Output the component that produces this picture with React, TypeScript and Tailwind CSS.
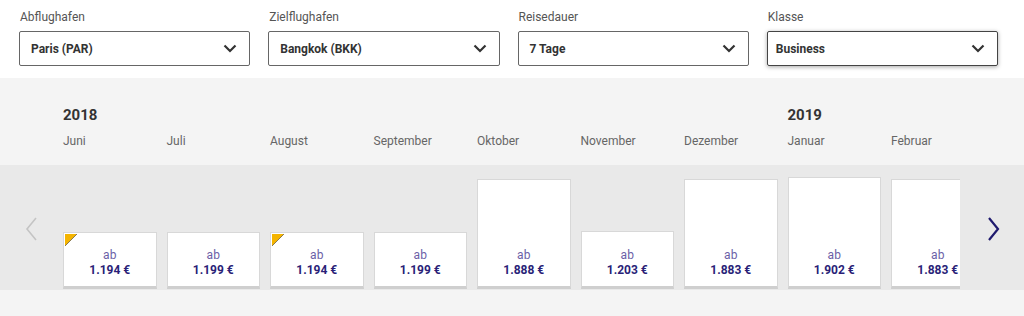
const selects = [
  { label: "Abflughafen", value: "Paris (PAR)" },
  { label: "Zielflughafen", value: "Bangkok (BKK)" },
  { label: "Reisedauer", value: "7 Tage" },
  { label: "Klasse", value: "Business", focused: true },
]

const months = [
  { name: "Juni", year: "2018", price: "1.194 €", h: "h-[57px]", deal: true },
  { name: "Juli", price: "1.199 €", h: "h-[57px]" },
  { name: "August", price: "1.194 €", h: "h-[57px]", deal: true },
  { name: "September", price: "1.199 €", h: "h-[57px]" },
  { name: "Oktober", price: "1.888 €", h: "h-[110px]" },
  { name: "November", price: "1.203 €", h: "h-[58px]" },
  { name: "Dezember", price: "1.883 €", h: "h-[110px]" },
  { name: "Januar", year: "2019", price: "1.902 €", h: "h-[112px]" },
  { name: "Februar", price: "1.883 €", h: "h-[110px]" },
]

function Chevron() {
  return (
    <svg width="14" height="9" viewBox="0 0 14 9" fill="none">
      <path d="M1.5 1.5 L7 7 L12.5 1.5" stroke="#333" strokeWidth="2.2" />
    </svg>
  )
}

export default function App() {
  return (
    <div className="w-[1024px] h-[316px] bg-[#f4f4f4] font-['Roboto',sans-serif] overflow-hidden">
      {/* filters */}
      <div className="bg-white pl-[19px] pr-[26px] pt-[10px] h-[78px] grid grid-cols-4 gap-x-[18px]">
        {selects.map((s) => (
          <div key={s.label} className="flex flex-col">
            <span className="text-[12px] leading-[15px] text-[#555] ml-[1px]">{s.label}</span>
            <div
              className={
                s.focused
                  ? "mt-[6px] h-[35px] border border-[#444] rounded-[2px] flex items-center justify-between pl-[8px] pr-[12px] shadow-[0_1px_4px_rgba(0,0,0,0.35)]"
                  : "mt-[6px] h-[35px] border border-[#666] rounded-[2px] flex items-center justify-between pl-[11px] pr-[12px]"
              }
            >
              <span className="text-[12px] font-bold text-[#333]">{s.value}</span>
              <Chevron />
            </div>
          </div>
        ))}
      </div>

      {/* months header */}
      <div className="h-[87px] flex">
        <div className="w-[63px] shrink-0" />
        <div className="flex gap-[10px] pt-[26px]">
          {months.map((m) => (
            <div key={m.name} className="w-[93.5px] shrink-0 flex flex-col">
              <span className="h-[22px] text-[15px] font-bold text-[#333] leading-[22px]">{m.year ?? ""}</span>
              <span className="mt-[8px] text-[12px] text-[#666] leading-[14px]">{m.name}</span>
            </div>
          ))}
        </div>
      </div>

      {/* bars */}
      <div className="h-[125px] bg-[#e9e9e9] flex">
        <div className="w-[63px] shrink-0 flex items-center justify-start pl-[24px] pt-[2px]">
          <svg width="16" height="26" viewBox="0 0 16 26" fill="none">
            <path d="M12 2 L3 13 L12 24" stroke="#c4c4c4" strokeWidth="1.6" />
          </svg>
        </div>
        <div className="w-[897px] shrink-0 overflow-hidden flex items-end gap-[10px] pb-[1px]">
          {months.map((m) => (
            <div
              key={m.name}
              className={`relative w-[93.5px] shrink-0 ${m.h} bg-white border border-[#d8d8d8] border-b-[3px] border-b-[#cfcfcf] flex flex-col items-center justify-end pb-[8px]`}
            >
              {m.deal && (
                <svg className="absolute left-[1px] top-[1px]" width="13" height="13" viewBox="0 0 13 13">
                  <path d="M0 0 H12 L0 12 Z" fill="#f4b400" />
                  <path d="M12 0 L0 12" stroke="#8a7a50" strokeWidth="1" />
                </svg>
              )}
              <span className="text-[12px] leading-[15px] text-[#6c5fa7]">ab</span>
              <span className="text-[12px] leading-[15px] font-bold text-[#2a1f78]">{m.price}</span>
            </div>
          ))}
        </div>
        <div className="flex-1 flex items-center justify-start pl-[25px] pt-[2px]">
          <svg width="16" height="26" viewBox="0 0 16 26" fill="none">
            <path d="M4 2 L13 13 L4 24" stroke="#1f1a6e" strokeWidth="2.2" />
          </svg>
        </div>
      </div>
    </div>
  )
}
